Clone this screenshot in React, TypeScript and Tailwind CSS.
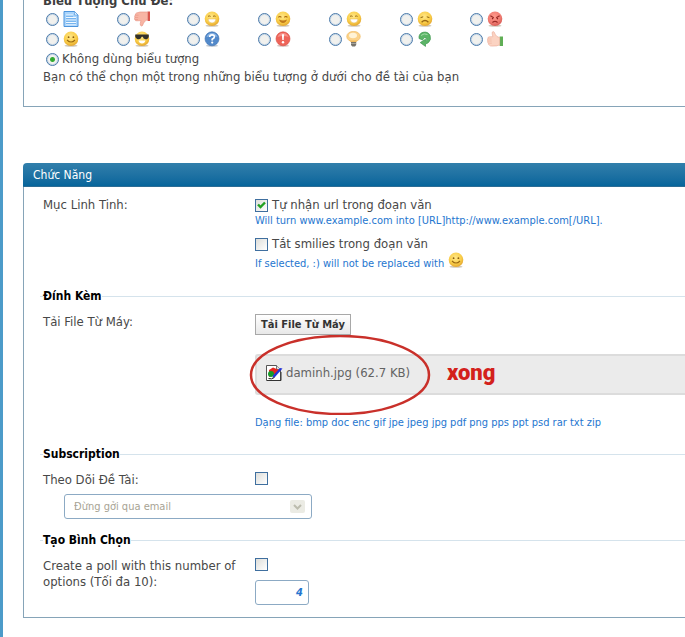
import React, { useState } from 'react';

type FaceMood = 'grin' | 'smile' | 'laugh' | 'sad' | 'angry' | 'happy' | 'cool';

function Face({ mood }: { mood: FaceMood }) {
  const angry = mood === 'angry';
  return (
    <svg viewBox="0 0 16 16" className="h-4 w-4 shrink-0" aria-hidden="true">
      <defs>
        <radialGradient id={`face-${mood}`} cx="45%" cy="35%" r="65%">
          <stop offset="0" stopColor={angry ? '#ff9a8c' : '#ffe788'} />
          <stop offset="0.65" stopColor={angry ? '#f07c72' : '#f9cd48'} />
          <stop offset="1" stopColor={angry ? '#d65c55' : '#e3a530'} />
        </radialGradient>
      </defs>
      <ellipse cx="8" cy="14.7" rx="6.5" ry="1" fill="#cfc8ba" />
      <circle cx="8" cy="7.8" r="7.3" fill={`url(#face-${mood})`} />
      {(mood === 'grin' || mood === 'laugh') && (
        <>
          <path d="M4 5.4q1-1 2.6 0M9 5.4q1-1 2.6 0" fill="none" stroke="#9a6b16" strokeWidth="1" />
          <path d="M4 8h8q-.4 4-4 4t-4-4z" fill="#fff" stroke="#e0b04a" strokeWidth="0.5" />
        </>
      )}
      {mood === 'smile' && (
        <>
          <path d="M3.4 6.4q1.4-1.8 3 0M9.4 6.4q1.4-1.8 3 0" fill="none" stroke="#a8680c" strokeWidth="1.2" />
          <path d="M4 8.5q4 2 8 0-1 3.4-4 3.4T4 8.5z" fill="#c07a1c" />
        </>
      )}
      {mood === 'happy' && (
        <>
          <circle cx="5.6" cy="6.2" r="0.9" fill="#8a5c10" />
          <circle cx="10.4" cy="6.2" r="0.9" fill="#8a5c10" />
          <path d="M4 9q4 4 8 0" fill="none" stroke="#9a6812" strokeWidth="1.1" />
        </>
      )}
      {mood === 'sad' && (
        <>
          <path d="M3.6 6.6l2.6-.8M12.4 6.6l-2.6-.8" stroke="#8d640f" strokeWidth="1" />
          <path d="M4.6 11.2q3.4-3.4 6.8 0" fill="none" stroke="#9a6812" strokeWidth="1.4" />
        </>
      )}
      {angry && (
        <>
          <path d="M3.4 4.8l3.4 2M12.6 4.8l-3.4 2" stroke="#9b2b26" strokeWidth="1.2" />
          <circle cx="5.6" cy="7.6" r="0.8" fill="#8e2420" />
          <circle cx="10.4" cy="7.6" r="0.8" fill="#8e2420" />
          <path d="M5.4 11.4q2.6-2 5.2 0" fill="none" stroke="#9b2b26" strokeWidth="1.2" />
        </>
      )}
      {mood === 'cool' && (
        <>
          <path d="M1.2 3.4h13.6v2q-.6 3-3.4 2.8-2.2-.2-2.6-2.4h-1.2Q7.2 8 5 8.200 2 8.200 1.200 5.400z" fill="#33312b" />
          <path d="M4.600 9.600h6.800q-.6 3-3.400 3t-3.400-3z" fill="#fff" />
        </>
      )}
    </svg>
  );
}

function DocIcon() {
  return (
    <svg viewBox="0 0 16 16" className="h-4 w-4 shrink-0" aria-hidden="true">
      <path d="M1 .5h10.500l3.500 3.500v11.500H1z" fill="#a9d4fb" stroke="#4d94dc" />
      <path d="M11.500.5V4H15z" fill="#eaf5ff" stroke="#4d94dc" strokeWidth="0.6" />
      <path d="M3 4h7M3 6.500h10M3 9h10M3 11.500h10M3 13.700h10" stroke="#f2f9ff" />
      <path d="M3 5.200h7M3 7.700h10M3 10.200h10M3 12.700h10" stroke="#5ba1e6" strokeWidth="0.8" />
    </svg>
  );
}

function ThumbDownIcon() {
  return (
    <svg viewBox="0 0 16 16" className="h-4 w-4 shrink-0" aria-hidden="true">
      <path d="M13.500.5H16v9.500h-2.500z" fill="#d9564d" />
      <path
        d="M13.500 1 6 1 2.500 2Q1 2.800 1.400 4 .2 5 .8 6.400 0 7.400.7 8.600 1.200 10 3 9.800l4-.2q-1.200 3.200-.6 4.600 1.200 1.600 2.200.2.400-2.200 3-4.800l1.900-.8z"
        fill="#f8b5a4"
        stroke="#e58d7c"
        strokeWidth="0.6"
      />
      <path d="M1.500 4.200h3M1 6.500h3.200M1 8.500h3" stroke="#e58d7c" strokeWidth="0.5" />
    </svg>
  );
}

function ThumbUpIcon() {
  return (
    <svg viewBox="0 0 16 16" className="h-4 w-4 shrink-0" aria-hidden="true">
      <path d="M12.600 5.500H16V15h-3.400z" fill="#5fae55" />
      <path
        d="M12.600 6.500 10 5.600Q7.600 3 7.300 1.300 6.300-.2 5.200 1.200q-.3 1.700.7 4.500l-3.500.1Q.4 6 .8 7.700-.1 8.800.8 9.900q-.6 1.200.5 2.300-.2 1.400 1 1.900.6 1.100 2.700 1l4.500-.2 3.100-1z"
        fill="#fbd3c2"
        stroke="#eba893"
        strokeWidth="0.6"
      />
      <path d="M1.200 8h3.300M1.300 10h3.300M1.800 12.200h3" stroke="#eba893" strokeWidth="0.5" />
    </svg>
  );
}

function QuestionIcon() {
  return (
    <svg viewBox="0 0 16 16" className="h-4 w-4 shrink-0" aria-hidden="true">
      <ellipse cx="8" cy="14.700" rx="6" ry="1" fill="#c3cad3" />
      <circle cx="8" cy="7.800" r="7" fill="#5289ca" stroke="#3c70b0" strokeWidth="0.6" />
      <path d="M2.500 6q1.500-4 5.500-4t5.500 4q-5-2-11 0z" fill="#8ab4e4" />
      <path d="M5.700 6q.1-2.200 2.400-2.200t2.300 2Q10.400 7 8.200 8.200v1.200" fill="none" stroke="#fff" strokeWidth="1.700" />
      <circle cx="8.200" cy="11.600" r="1.100" fill="#fff" />
    </svg>
  );
}

function ExclamationIcon() {
  return (
    <svg viewBox="0 0 16 16" className="h-4 w-4 shrink-0" aria-hidden="true">
      <ellipse cx="8" cy="14.700" rx="6" ry="1" fill="#d8c4c2" />
      <circle cx="8" cy="7.800" r="7" fill="#ee6459" stroke="#d64b42" strokeWidth="0.6" />
      <path d="M2.500 6q1.500-4 5.500-4t5.500 4q-5-2-11 0z" fill="#f79088" />
      <path d="M6.900 3.200h2.200l-.4 5.800H7.300z" fill="#fff" />
      <circle cx="8" cy="11.200" r="1.200" fill="#fff" />
    </svg>
  );
}

function BulbIcon() {
  return (
    <svg viewBox="0 0 16 16" className="h-4 w-4 shrink-0" aria-hidden="true">
      <ellipse cx="7.500" cy="5.500" rx="6.800" ry="5.200" fill="#fbd28a" stroke="#efb75c" strokeWidth="0.6" />
      <ellipse cx="7" cy="4.500" rx="4" ry="2.800" fill="#fff3d6" />
      <path d="M4 9.500h7l-1 2H5z" fill="#f2bb5c" />
      <path d="M5 11h5.200v3l-1.200 1.500H6.200L5 14z" fill="#77746c" />
      <path d="M5 12.500h5.200" stroke="#bbb8ae" strokeWidth="0.7" />
    </svg>
  );
}

function ArrowIcon() {
  return (
    <svg viewBox="0 0 16 16" className="h-4 w-4 shrink-0" aria-hidden="true">
      <path
        d="M2 7.500Q1.500 2.500 6 1.300q5-1 7 3 1.600 4.500-1.500 7.200-1.500 1.200-3 1.300v2.600L3.200 11.600l5.300-3.400v1.600Q10.200 9 9.600 7.400L7.500 6.500 5.500 9z"
        fill="#5cb567"
        stroke="#3f9650"
        strokeWidth="0.700"
      />
      <path d="M4 4.500Q7 1.800 10.500 3.500" fill="none" stroke="#a5dcaa" strokeWidth="1" />
    </svg>
  );
}

function ImageFileIcon() {
  return (
    <svg viewBox="0 0 17 16" className="h-4 w-[17px] shrink-0" aria-hidden="true">
      <path d="M.5.500h10l4 4v11H.5z" fill="#fff" stroke="#555" />
      <path d="M10.500.500v4h4" fill="#ddd" stroke="#555" strokeWidth="0.800" />
      <path d="M3 5l4-2.500L13 5l-3 4-7 3z" fill="#e5261f" />
      <circle cx="5" cy="9" r="3" fill="#159a2b" />
      <path d="M16.500 3.500 9 12l-2.500 1 .8-2.800L14 3z" fill="#2433d8" />
      <path d="M2.500 13.500q3 1.200 6-1" fill="none" stroke="#222" />
      <path d="M1 15.500h14V7" fill="none" stroke="#333" />
    </svg>
  );
}

const topicIcons = [
  { id: 'post', label: 'Post', icon: <DocIcon /> },
  { id: 'thumbdown', label: 'Thumbs down', icon: <ThumbDownIcon /> },
  { id: 'grin', label: 'Grin', icon: <Face mood="grin" /> },
  { id: 'smile', label: 'Smile', icon: <Face mood="smile" /> },
  { id: 'laugh', label: 'Laugh', icon: <Face mood="laugh" /> },
  { id: 'sad', label: 'Sad', icon: <Face mood="sad" /> },
  { id: 'angry', label: 'Angry', icon: <Face mood="angry" /> },
  { id: 'happy', label: 'Happy', icon: <Face mood="happy" /> },
  { id: 'cool', label: 'Cool', icon: <Face mood="cool" /> },
  { id: 'question', label: 'Question', icon: <QuestionIcon /> },
  { id: 'exclamation', label: 'Exclamation', icon: <ExclamationIcon /> },
  { id: 'idea', label: 'Idea', icon: <BulbIcon /> },
  { id: 'arrow', label: 'Arrow', icon: <ArrowIcon /> },
  { id: 'thumbup', label: 'Thumbs up', icon: <ThumbUpIcon /> },
];

const radioClass =
  'h-[13px] w-[13px] shrink-0 appearance-none rounded-full border border-[#4a7aab] bg-[#f1f1ee] ring-1 ring-[#c9d8e6] ring-inset checked:bg-[radial-gradient(circle,#2fa52f_0,#35ad35_2px,#f3f3f0_3px)]';

function CheckBox({ id, label, defaultChecked }: { id: string; label?: string; defaultChecked?: boolean }) {
  return (
    <span className="grid h-[13px] w-[13px] shrink-0">
      <input
        id={id}
        type="checkbox"
        aria-label={label}
        defaultChecked={defaultChecked}
        className="peer col-start-1 row-start-1 h-[13px] w-[13px] appearance-none border border-[#3f6f9f] bg-linear-to-br from-[#dededa] to-white"
      />
      <svg
        viewBox="0 0 13 13"
        className="pointer-events-none invisible col-start-1 row-start-1 h-[13px] w-[13px] peer-checked:visible"
        aria-hidden="true"
      >
        <path d="M3 5.500 5.500 8 10 3.500" fill="none" stroke="#21a121" strokeWidth="2.400" />
      </svg>
    </span>
  );
}

function SectionTitle({ children }: { children: React.ReactNode }) {
  return (
    <h3 className="-ml-[3px] flex h-4 items-center text-[12px] font-bold text-black">
      <span className="h-px w-[3px] bg-[#d5e3ec]" />
      <span>{children}</span>
      <span className="h-px flex-1 bg-[#d5e3ec]" />
    </h3>
  );
}

export default function App() {
  const [icon, setIcon] = useState('none');

  return (
    <main className="overflow-hidden border-l-[3px] border-[#4c9bc9] bg-white pb-[19px] pl-5 font-['DejaVu_Sans_Condensed','DejaVu_Sans',sans-serif] text-[13px] leading-4 text-[#484848]">
      {/* Topic icons */}
      <section className="border-b border-l border-[#86a4b8] pb-5 pl-[19px]">
        <h2 className="-mt-[7px] h-4 text-[13px] font-bold text-[#3e3e3e]">Biểu Tượng Chủ Đề:</h2>
        <div className="grid max-w-[498px] grid-cols-7 pl-[3px]">
          {topicIcons.map((item) => (
            <label key={item.id} className="flex h-5 items-center gap-1">
              <input
                type="radio"
                name="topic-icon"
                aria-label={item.label}
                checked={icon === item.id}
                onChange={() => setIcon(item.id)}
                className={radioClass}
              />
              {item.icon}
            </label>
          ))}
        </div>
        <label className="flex h-5 items-center gap-[3px] pl-[3px]">
          <input
            type="radio"
            name="topic-icon"
            checked={icon === 'none'}
            onChange={() => setIcon('none')}
            className={radioClass}
          />
          Không dùng biểu tượng
        </label>
        <p className="pb-px">Bạn có thể chọn một trong những biểu tượng ở dưới cho đề tài của bạn</p>
      </section>

      {/* Options */}
      <section className="mt-14">
        <h2 className="flex h-6 items-center rounded-tl-[4px] border-b border-[#2c6c94] bg-linear-to-b from-[#317fab] to-[#05659b] pl-[10px] text-[12px] text-white">
          Chức Năng
        </h2>
        <div className="border-b border-l border-[#86a4b8] pt-[10px] pb-3 pl-[19px]">
          <div className="grid grid-cols-[212px_1fr]">
            <p>Mục Linh Tinh:</p>
            <div>
              <label htmlFor="parse-url" className="flex h-4 items-center gap-1">
                <CheckBox id="parse-url" defaultChecked />
                Tự nhận url trong đoạn văn
              </label>
              <p className="text-[11px] text-[#2576cf]">
                Will turn www.example.com into [URL]http://www.example.com[/URL].
              </p>
              <label htmlFor="disable-smilies" className="mt-[7px] flex h-4 items-center gap-1">
                <CheckBox id="disable-smilies" />
                Tắt smilies trong đoạn văn
              </label>
              <p className="flex h-5 items-end gap-1 text-[11px] text-[#2576cf]">
                If selected, :) will not be replaced with
                <span className="self-start">
                  <Face mood="happy" />
                </span>
              </p>
            </div>
          </div>

          <div className="mt-4">
            <SectionTitle>Đính Kèm</SectionTitle>
          </div>
          <div className="mt-[10px] grid grid-cols-[212px_1fr]">
            <p>Tải File Từ Máy:</p>
            <div>
              <button
                type="button"
                className="block h-[21px] border border-[#a8a8a8] bg-linear-to-b from-white to-[#e8e8e8] px-[5px] text-[11px] leading-4 font-bold text-[#333]"
              >
                Tải File Từ Máy
              </button>
              <div className="relative mt-[19px] flex h-[41px] items-center rounded-l-[3px] border-2 border-r-0 border-[#dcdcdc] bg-[#ebebeb] pb-1 pl-[9px] text-[#636363]">
                <ImageFileIcon />
                <a href="#daminh" className="ml-[3px]">
                  daminh.jpg (62.7 KB)
                </a>
                <svg viewBox="0 0 182 80" className="pointer-events-none absolute -top-[21px] -left-2 h-20 w-[182px]" aria-hidden="true">
                  <ellipse cx="91" cy="40" rx="89" ry="39" fill="none" stroke="#c9302a" strokeWidth="2.500" />
                </svg>
                <strong className="absolute left-[190px] font-[Roboto,sans-serif] text-[22px] font-black text-[#d3211c]">xong</strong>
              </div>
              <p className="mt-5 text-[11px] text-[#2576cf]">
                Dạng file: bmp doc enc gif jpe jpeg jpg pdf png pps ppt psd rar txt zip
              </p>
            </div>
          </div>

          <div className="mt-[15px]">
            <SectionTitle>Subscription</SectionTitle>
          </div>
          <div className="mt-[10px] grid grid-cols-[212px_1fr]">
            <label htmlFor="subscribe">Theo Dõi Đề Tài:</label>
            <CheckBox id="subscribe" />
          </div>
          <div className="mt-[6px] ml-[21px] grid w-[248px] items-center">
            <select
              aria-label="Theo Dõi Đề Tài"
              disabled
              className="col-start-1 row-start-1 h-[25px] w-full appearance-none rounded-[3px] border border-[#8caac4] bg-white px-[9px] text-[11px] text-[#a7a394] opacity-100"
            >
              <option>Đừng gởi qua email</option>
            </select>
            <span className="pointer-events-none col-start-1 row-start-1 mr-[7px] flex h-[13px] w-[15px] items-center justify-center justify-self-end rounded-xs bg-[#ebebe4]">
              <svg viewBox="0 0 9 6" className="h-[6px] w-[9px]" aria-hidden="true">
                <path d="M1 1l3.500 3.500L8 1" fill="none" stroke="#bcbcae" strokeWidth="2" />
              </svg>
            </span>
          </div>

          <div className="mt-[13px]">
            <SectionTitle>Tạo Bình Chọn</SectionTitle>
          </div>
          <div className="mt-[10px] grid grid-cols-[212px_1fr]">
            <label htmlFor="poll" className="pr-2">
              Create a poll with this number of options (Tối đa 10):
            </label>
            <div>
              <CheckBox id="poll" />
              <input
                type="text"
                aria-label="Tối đa 10"
                defaultValue="4"
                className="mt-[9px] block h-[25px] w-[54px] rounded-[3px] border border-[#8caac4] px-[5px] text-right text-[11px] font-bold text-[#2576cf] italic"
              />
            </div>
          </div>
        </div>
      </section>
    </main>
  );
}
